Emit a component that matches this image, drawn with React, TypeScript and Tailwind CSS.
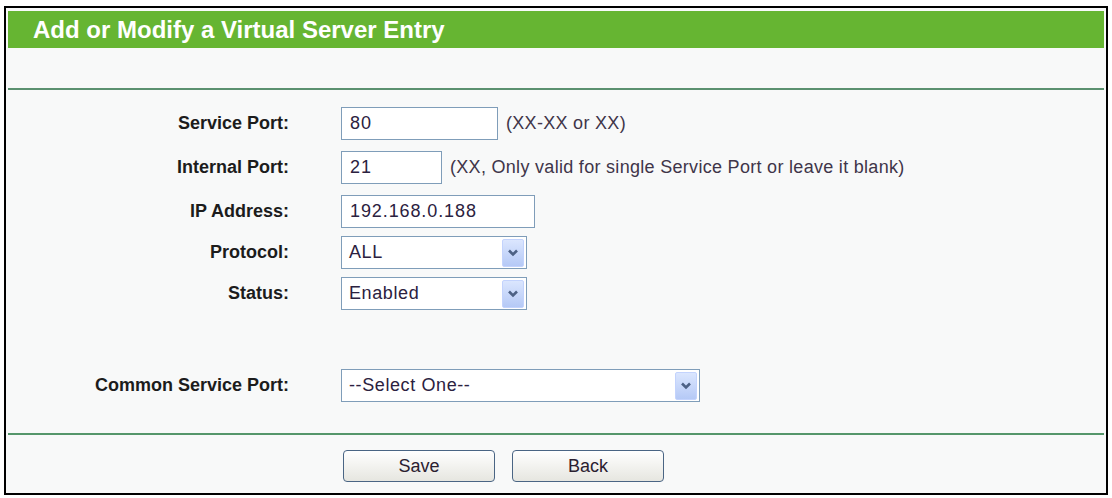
import React from 'react';

const font = { fontFamily: '"Liberation Sans", Arial, sans-serif' };

function DropArrow() {
  return (
    <span className="flex h-[28px] w-[22px] items-center justify-center rounded-[2px] border border-[#c3d3fd] bg-gradient-to-b from-[#dbe6fe] to-[#b5c9f6]">
      <svg width="12" height="9" viewBox="0 0 12 9">
        <path d="M2 2.5 L6 6.5 L10 2.5" fill="none" stroke="#4d6185" strokeWidth="2.6" />
      </svg>
    </span>
  );
}

function Select({ value, width }: { value: string; width: string }) {
  return (
    <div
      className={`flex h-[33px] items-center justify-between border border-[#7f9db9] bg-white pl-[7px] pr-[2px] text-[18px] tracking-[0.6px] text-[#2b2140] ${width}`}
    >
      <span>{value}</span>
      <DropArrow />
    </div>
  );
}

function TextBox({ value, width }: { value: string; width: string }) {
  return (
    <input
      readOnly
      value={value}
      className={`h-[33px] border border-[#7f9db9] bg-white pl-[8px] text-[18px] tracking-[0.9px] text-[#2b2140] outline-none ${width}`}
      style={font}
    />
  );
}

function Row({ label, top, children }: { label: string; top: string; children: React.ReactNode }) {
  return (
    <div className={`flex items-center ${top}`}>
      <div className="w-[281px] text-right text-[18px] font-bold text-[#1c1c1c]">{label}</div>
      <div className="ml-[52px] flex items-center">{children}</div>
    </div>
  );
}

function Hint({ children }: { children: React.ReactNode }) {
  return <span className="ml-[8px] text-[18px] tracking-[0.3px] text-[#3f3549]">{children}</span>;
}

export default function App() {
  return (
    <div className="h-[498px] w-[1112px] bg-white pl-[4px] pt-[6px]" style={font}>
      <div className="h-[489px] w-[1104px] border-2 border-black bg-[#f8f9f9] px-[2px] pt-[3px]">
        <div className="flex h-[37px] items-center bg-[#66b532] pl-[25px] text-[24px] font-bold text-white">
          Add or Modify a Virtual Server Entry
        </div>
        <div className="mt-[40px] h-[2px] bg-[#5b9170]" />

        <div className="flex flex-col">
          <Row label="Service Port:" top="mt-[17px]">
            <TextBox value="80" width="w-[157px]" />
            <Hint>(XX-XX or XX)</Hint>
          </Row>
          <Row label="Internal Port:" top="mt-[11px]">
            <TextBox value="21" width="w-[101px]" />
            <Hint>(XX, Only valid for single Service Port or leave it blank)</Hint>
          </Row>
          <Row label="IP Address:" top="mt-[11px]">
            <TextBox value="192.168.0.188" width="w-[194px]" />
          </Row>
          <Row label="Protocol:" top="mt-[8px]">
            <Select value="ALL" width="w-[186px]" />
          </Row>
          <Row label="Status:" top="mt-[8px]">
            <Select value="Enabled" width="w-[186px]" />
          </Row>
          <Row label="Common Service Port:" top="mt-[59px]">
            <Select value="--Select One--" width="w-[359px]" />
          </Row>
        </div>

        <div className="mt-[31px] h-[2px] bg-[#55966b]" />
        <div className="mt-[15px] flex pl-[335px]">
          <button className="h-[32px] w-[152px] rounded-[4px] border border-[#4a6584] bg-gradient-to-b from-white to-[#e6e6e0] text-[18px] text-[#2a2030]">
            Save
          </button>
          <button className="ml-[17px] h-[32px] w-[152px] rounded-[4px] border border-[#4a6584] bg-gradient-to-b from-white to-[#e6e6e0] text-[18px] text-[#2a2030]">
            Back
          </button>
        </div>
      </div>
    </div>
  );
}
